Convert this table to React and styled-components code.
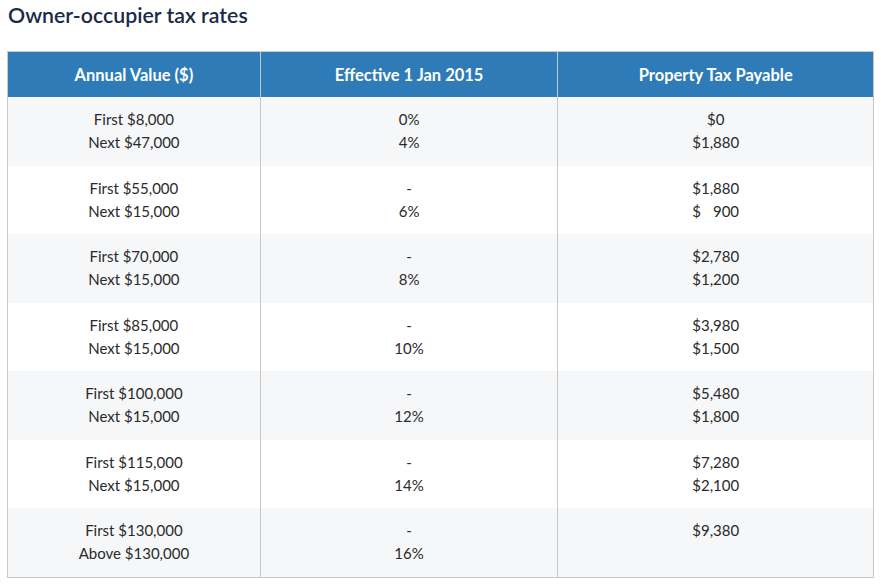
import React from 'react'
import styled, { createGlobalStyle } from 'styled-components'

const GlobalStyle = createGlobalStyle`
  body {
    margin: 0;
    background: #fff;
    font-family: 'Source Sans Pro', 'Lato', 'Open Sans', sans-serif;
  }
`

const columns = [
  { title: 'Annual Value ($)', width: 252 },
  { title: 'Effective 1 Jan 2015', width: 297 },
  { title: 'Property Tax Payable', width: 315 },
]

const rows = [
  [['First $8,000', 'Next $47,000'], ['0%', '4%'], ['$0', '$1,880']],
  [['First $55,000', 'Next $15,000'], ['-', '6%'], ['$1,880', '$\u2007\u2008900']],
  [['First $70,000', 'Next $15,000'], ['-', '8%'], ['$2,780', '$1,200']],
  [['First $85,000', 'Next $15,000'], ['-', '10%'], ['$3,980', '$1,500']],
  [['First $100,000', 'Next $15,000'], ['-', '12%'], ['$5,480', '$1,800']],
  [['First $115,000', 'Next $15,000'], ['-', '14%'], ['$7,280', '$2,100']],
  [['First $130,000', 'Above $130,000'], ['-', '16%'], ['$9,380']],
]

const TaxRates = () => {
  return (
    <Page>
      <GlobalStyle />
      <Title>Owner-occupier tax rates</Title>
      <Table>
        <thead>
          <tr>
            {columns.map((col) => (
              <HeadCell key={col.title} $width={col.width}>
                {col.title}
              </HeadCell>
            ))}
          </tr>
        </thead>
        <tbody>
          {rows.map((row, i) => (
            <BodyRow key={i} $shaded={i % 2 === 0}>
              {row.map((cell, j) => (
                <Cell key={j}>
                  {cell.map((line, k) => (
                    <Line key={k}>{line}</Line>
                  ))}
                </Cell>
              ))}
            </BodyRow>
          ))}
        </tbody>
      </Table>
    </Page>
  )
}

const Page = styled.section`
  padding: 1px 7px 0 7px;
  color: #222;
`

const Title = styled.h2`
  margin: 0 0 0 1px;
  font-size: 21.3px;
  font-weight: 600;
  color: #1b2a45;
  line-height: 28px;
`

const Table = styled.table`
  margin-top: 22px;
  border-collapse: collapse;
  table-layout: fixed;
  border: 1px solid #c8c8c8;
`

const HeadCell = styled.th`
  width: ${(p) => p.$width}px;
  background: #2e7bb8;
  color: #fff;
  font-size: 16.5px;
  font-weight: 700;
  height: 45px;
  padding: 0;
  border-left: 1px solid #c8c8c8;
`

const BodyRow = styled.tr`
  background: ${(p) => (p.$shaded ? '#f6f7f9' : '#fff')};
`

const Cell = styled.td`
  text-align: center;
  vertical-align: top;
  font-size: 15px;
  line-height: 23px;
  padding: 11px 0 11.5px;
  color: #2a2a2a;
  border-left: 1px solid #c8c8c8;
`

const Line = styled.div`
  white-space: pre;
`

export default TaxRates
